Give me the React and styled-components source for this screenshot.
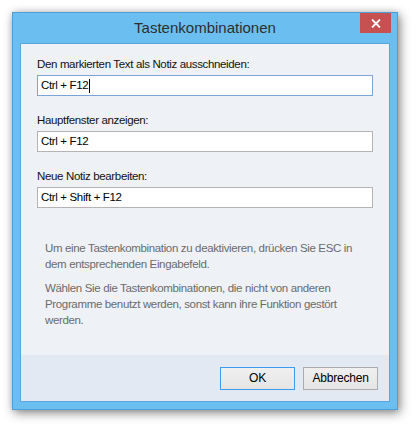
import styled, { createGlobalStyle } from "styled-components";

const GlobalStyle = createGlobalStyle`
  html, body {
    margin: 0;
    background: #ffffff;
  }
  body {
    font-family: "Liberation Sans", Arial, sans-serif;
    font-size: 11.5px;
    letter-spacing: -0.35px;
    color: #000;
  }
`;

const Stage = styled.div`
  padding: 12px 0 0 12px;
  width: 418px;
  height: 430px;
  box-sizing: border-box;
`;

const Window = styled.div`
  width: 386px;
  box-sizing: border-box;
  background: #6bbff0;
  border: 1px solid #4f9fd6;
  padding: 0 7px 7px;
  box-shadow: 2px 3px 10px rgba(0, 0, 0, 0.45), 0 0 6px rgba(0, 0, 0, 0.12);
`;

const TitleBar = styled.div`
  display: grid;
  grid-template-columns: 1fr auto 1fr;
  height: 30px;
`;

const Title = styled.div`
  grid-column: 2;
  font-size: 15px;
  letter-spacing: 0;
  line-height: 30px;
  color: #2e2e2e;
`;

const CloseButton = styled.button`
  grid-column: 3;
  justify-self: end;
  align-self: start;
  width: 31px;
  height: 20px;
  margin-right: -1px;
  padding: 0;
  border: none;
  background: #c75050;
  display: flex;
  align-items: center;
  justify-content: center;
`;

const Client = styled.div`
  height: 359px;
  box-sizing: border-box;
  border: 1px solid #5aa6dc;
  background: #eef1f6;
  display: flex;
  flex-direction: column;
`;

const Body = styled.div`
  flex: 1;
  padding: 13px 16px 0;
`;

const Fields = styled.div`
  display: flex;
  flex-direction: column;
  gap: 17px;
`;

const Field = styled.div`
  display: flex;
  flex-direction: column;
`;

const Label = styled.label`
  line-height: 15px;
  margin-bottom: 3px;
  color: #111;
`;

const Input = styled.div`
  height: 21px;
  box-sizing: border-box;
  background: #fff;
  border: 1px solid ${(p) => (p.$focused ? "#7aa5d6" : "#b4b4b4")};
  padding: 0 3px;
  line-height: 19px;
  color: #000;
  display: flex;
  align-items: center;
`;

const Caret = styled.span`
  display: inline-block;
  width: 1px;
  height: 14px;
  background: #000;
  margin-left: 1px;
`;

const Info = styled.div`
  margin-top: 32px;
  padding-left: 8px;
  display: flex;
  flex-direction: column;
  gap: 8px;
`;

const Para = styled.p`
  margin: 0;
  line-height: 16px;
  white-space: nowrap;
  color: #6b6b6b;
`;

const Footer = styled.div`
  height: 46px;
  box-sizing: border-box;
  background: #e3e9f2;
  display: flex;
  justify-content: flex-end;
  align-items: center;
  gap: 8px;
  padding: 0 11px;
`;

const Button = styled.button`
  width: 75px;
  height: 23px;
  box-sizing: border-box;
  border: 1px solid ${(p) => (p.$default ? "#3c9af0" : "#acacac")};
  background: linear-gradient(#f0f0f0, #e5e5e5);
  font-family: inherit;
  font-size: 12px;
  letter-spacing: -0.2px;
  color: #000;
  padding: 0;
`;

const fields = [
  { label: "Den markierten Text als Notiz ausschneiden:", value: "Ctrl + F12", focused: true },
  { label: "Hauptfenster anzeigen:", value: "Ctrl + F12" },
  { label: "Neue Notiz bearbeiten:", value: "Ctrl + Shift + F12" },
];

export default function App() {
  return (
    <Stage>
      <GlobalStyle />
      <Window>
        <TitleBar>
          <Title>Tastenkombinationen</Title>
          <CloseButton aria-label="Schließen">
            <svg width="10" height="9" viewBox="0 0 10 9">
              <path d="M1 0.5 L9 8.5 M9 0.5 L1 8.5" stroke="#fff" strokeWidth="1.8" />
            </svg>
          </CloseButton>
        </TitleBar>
        <Client>
          <Body>
            <Fields>
              {fields.map((f) => (
                <Field key={f.label}>
                  <Label>{f.label}</Label>
                  <Input $focused={f.focused}>
                    {f.value}
                    {f.focused && <Caret />}
                  </Input>
                </Field>
              ))}
            </Fields>
            <Info>
              <Para>
                Um eine Tastenkombination zu deaktivieren, drücken Sie ESC in
                <br />
                dem entsprechenden Eingabefeld.
              </Para>
              <Para>
                Wählen Sie die Tastenkombinationen, die nicht von anderen
                <br />
                Programme benutzt werden, sonst kann ihre Funktion gestört
                <br />
                werden.
              </Para>
            </Info>
          </Body>
          <Footer>
            <Button $default>OK</Button>
            <Button>Abbrechen</Button>
          </Footer>
        </Client>
      </Window>
    </Stage>
  );
}
